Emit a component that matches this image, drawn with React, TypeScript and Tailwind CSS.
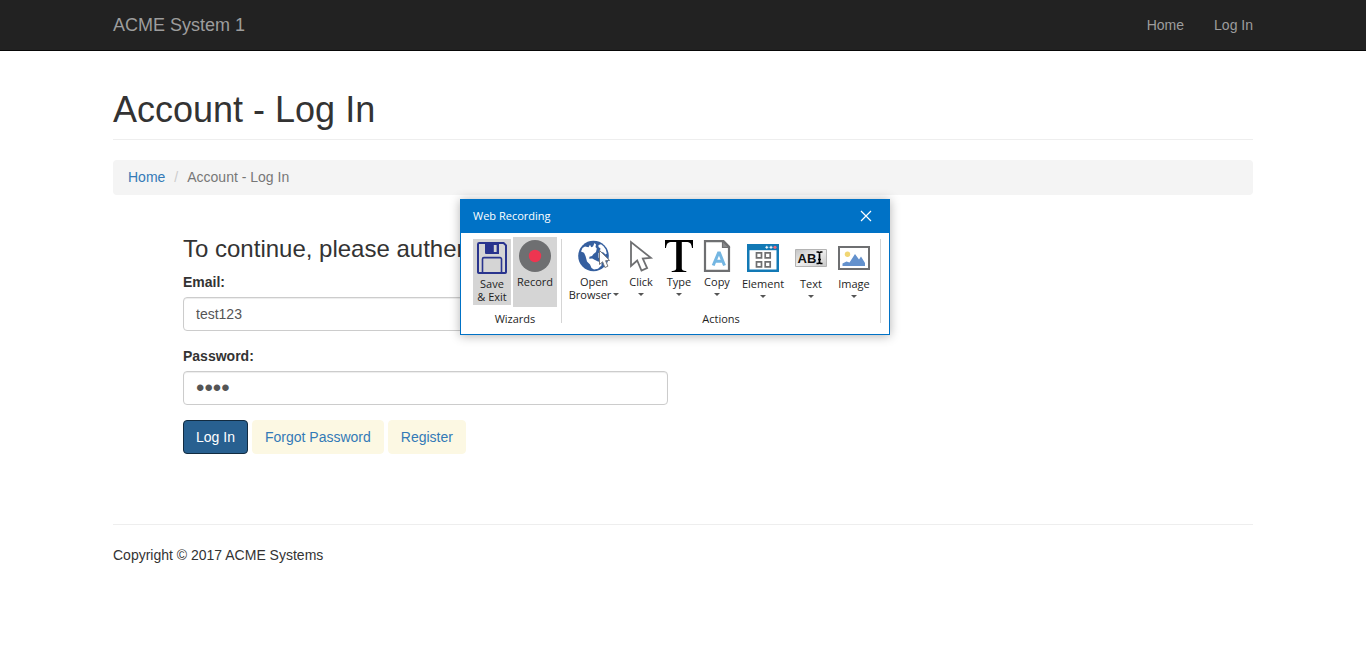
import React from "react";

function SaveIcon() {
  return (
    <svg width="32" height="32" viewBox="0 0 32 32" fill="none" aria-hidden="true">
      <path d="M3.200 1h24.400L30 3.400V30.200a.8.8 0 0 1-.8.8H2.800a.8.8 0 0 1-.8-.8V2.200A1.200 1.200 0 0 1 3.200 1Z" stroke="#29348e" strokeWidth="2" />
      <path d="M9 1h14v11H10a1 1 0 0 1-1-1V1Z" fill="#29348e" />
      <path d="M17.800 3h2.800v7h-2.800z" fill="#d5d5d5" />
      <path d="M6.500 31V17a1.400 1.400 0 0 1 1.400-1.400h16.200a1.400 1.400 0 0 1 1.400 1.400v14" stroke="#29348e" strokeWidth="1.600" />
    </svg>
  );
}

function RecordIcon() {
  return (
    <svg width="32" height="32" viewBox="0 0 32 32" aria-hidden="true">
      <circle cx="16" cy="16" r="16" fill="#6e6f71" />
      <circle cx="16" cy="16" r="6.2" fill="#ee3550" />
    </svg>
  );
}

function BrowserIcon() {
  return (
    <svg width="32" height="32" viewBox="0 0 32 32" aria-hidden="true">
      <circle cx="15.5" cy="16" r="15.3" fill="#355f9f" />
      <path d="M3 11.500 4.500 8l2.500-1.500 3.500.8L12 4.800l1.200 2.400 1.800-.7L16.500 3l1.500 1.500-.5 2.500 1.300 1.500-.8 3.500-2.500 2-1.500 2-2.500.8-.3 2 3-.3 2.800 1.500 3 1.500 3.500.8v3.200l-3.500 3.300-4 .7-2.500-1.500-1.500-3.500-3-3L7.500 16 6 12.800Z" fill="#fff" />
      <path d="m20.500 5 2.500-.8 2.500 2 2.300 3.300 1 4-1.300 1-2-2-2-.5-1.500-1.500.5-2-2-1.500ZM20.500 13l2-1 2.500 2 .5 5-2.500 2-2.500-3.500Z" fill="#fff" />
      <path d="M21.500 10.500v14l3.100-2.700 2.300 5.700 3-1.300-2.300-5.500 4-.3Z" fill="#fff" stroke="#77787b" strokeWidth="1" />
    </svg>
  );
}

function ClickIcon() {
  return (
    <svg width="32" height="32" viewBox="0 0 32 32" fill="none" aria-hidden="true">
      <path d="M6 2v24l6.2-5.5 4.3 10 5.6-2.4-4.3-9.6 8-.7L6 2Z" stroke="#6e6f71" strokeWidth="1.800" />
    </svg>
  );
}

function TypeIcon() {
  return (
    <svg width="32" height="32" viewBox="0 0 32 32" aria-hidden="true">
      <path d="M2 0h28v8h-1c-.5-4.500-2-6-6-6h-4.200v26c0 2 1 3 4.500 3v1H8.700v-1c3.500 0 4.500-1 4.500-3V2H9C5 2 3.500 3.500 3 8H2Z" fill="#000" />
    </svg>
  );
}

function CopyIcon() {
  return (
    <svg width="32" height="32" viewBox="0 0 32 32" fill="none" aria-hidden="true">
      <path d="M4 1.200h18.500l5.500 5.500v24.100H4Z" fill="#fff" stroke="#6e6f71" strokeWidth="2.200" />
      <path d="M21.500 1v6.500H28Z" fill="#8a8b8d" stroke="#6e6f71" strokeWidth="1.200" />
      <path d="m12.200 25.500 5.300-12.500h1l5 12.500M14 21.300h7.800" stroke="#74b6e2" strokeWidth="3" />
    </svg>
  );
}

function ElementIcon() {
  return (
    <svg width="32" height="32" viewBox="0 0 32 32" fill="none" aria-hidden="true">
      <path d="M0 2h32v28H0Z" fill="#1279b5" />
      <path d="M2.500 8.200h27v19.300h-27Z" fill="#fff" />
      <path d="M18.300 5.300h3M19.800 3.800v3M22.500 5.300h3M24 3.800v3" stroke="#fff" strokeWidth="1" />
      <circle cx="28" cy="5.300" r="1.600" fill="#ee6a7c" />
      <path d="M9.500 10.800h5v5h-5ZM18.200 10.800h5v5h-5ZM9.500 19.800h5v5h-5ZM18.200 19.800h5v5h-5Z" stroke="#6e6f71" strokeWidth="1.700" />
    </svg>
  );
}

function TextIcon() {
  return (
    <svg width="32" height="32" viewBox="0 0 32 32" aria-hidden="true">
      <defs>
        <linearGradient id="field" x1="0" y1="0" x2="1" y2="1">
          <stop offset="0" stopColor="#c4c4c4" />
          <stop offset=".5" stopColor="#ededed" />
          <stop offset="1" stopColor="#c8c8c8" />
        </linearGradient>
      </defs>
      <path d="M.5 7.500h31v17H.5Z" fill="url(#field)" stroke="#b4b4b4" />
      <text x="2.500" y="20.500" fontFamily="Liberation Sans, Arial, sans-serif" fontSize="13" fontWeight="700" fill="#111">AB</text>
      <path d="M21.500 10h1.800l1.200 1 1.200-1h1.800M21.500 21.500h1.800l1.200-1 1.200 1h1.800M24.500 10.500v10.500M23 17.500h3" fill="none" stroke="#000" strokeWidth="1.700" />
    </svg>
  );
}

function ImageIcon() {
  return (
    <svg width="32" height="32" viewBox="0 0 32 32" aria-hidden="true">
      <path d="M1 5h30v22H1Z" fill="#fff" stroke="#6e6f71" strokeWidth="2" />
      <circle cx="9.500" cy="12.300" r="2.700" fill="#f1d673" />
      <path d="M4.500 24v-2.500l4-2 3 1 5.500-8.500 4 5.500 2-3 4 6.500V24Z" fill="#6391cd" />
    </svg>
  );
}

function Caret() {
  return (
    <svg width="6" height="3" viewBox="0 0 6 3" aria-hidden="true">
      <path d="M0 0h6L3 3Z" fill="#555" />
    </svg>
  );
}

type ToolProps = {
  icon: React.ReactNode;
  lines: string[];
  className: string;
  menu?: "inline" | "below";
};

function Tool({ icon, lines, className, menu }: ToolProps) {
  return (
    <button type="button" className={`flex flex-col items-center pt-[3px] text-[11px] leading-[13px] text-[#1e1e1e] ${className}`}>
      {icon}
      <span className="mt-[3px] flex flex-col items-center whitespace-nowrap">
        {lines.map((line, i) => (
          <span key={line} className="flex items-center gap-0.5">
            {line}
            {menu === "inline" && i === lines.length - 1 && <Caret />}
          </span>
        ))}
      </span>
      {menu === "below" && (
        <span className="mt-[5px]">
          <Caret />
        </span>
      )}
    </button>
  );
}

function RecordingWindow() {
  return (
    <section
      aria-label="Web Recording"
      className="absolute top-[199px] left-[460px] flex flex-col border border-[#0072c6] bg-white font-['Open_Sans','Noto_Sans',sans-serif] shadow-[0_1px_10px_rgba(0,0,0,0.3)]"
    >
      <header className="flex h-[33px] items-center justify-between bg-[#0072c6] pr-[17px] pb-0.5 pl-3 text-[11px] text-white">
        <h2>Web Recording</h2>
        <button type="button" aria-label="Close">
          <svg width="12" height="12" viewBox="0 0 12 12" aria-hidden="true">
            <path d="m1 1 10 10M11 1 1 11" stroke="#fff" strokeWidth="1.200" />
          </svg>
        </button>
      </header>
      <div className="flex pt-1 pr-2 pb-[9px] pl-3 text-[11px] leading-[13px] text-[#1e1e1e]">
        <div className="flex flex-col">
          <div className="flex h-[75px] items-start gap-0.5">
            <Tool icon={<SaveIcon />} lines={["Save", "& Exit"]} className="mt-0.5 h-[66px] w-[38px] bg-[#d5d5d5]" />
            <Tool icon={<RecordIcon />} lines={["Record"]} className="h-[70px] w-11 bg-[#d5d5d5]" />
          </div>
          <span className="text-center">Wizards</span>
        </div>
        <div className="mx-1 my-0.5 w-px bg-[#d5d5d5]" />
        <div className="flex flex-col">
          <div className="flex h-[75px] items-start">
            <Tool icon={<BrowserIcon />} lines={["Open", "Browser"]} className="w-14" menu="inline" />
            <Tool icon={<ClickIcon />} lines={["Click"]} className="w-[38px]" menu="below" />
            <Tool icon={<TypeIcon />} lines={["Type"]} className="w-[38px]" menu="below" />
            <Tool icon={<CopyIcon />} lines={["Copy"]} className="w-[38px]" menu="below" />
            <Tool icon={<ElementIcon />} lines={["Element"]} className="mt-0.5 w-[54px]" menu="below" />
            <Tool icon={<TextIcon />} lines={["Text"]} className="mt-0.5 w-[42px]" menu="below" />
            <Tool icon={<ImageIcon />} lines={["Image"]} className="mt-0.5 w-11" menu="below" />
          </div>
          <span className="text-center">Actions</span>
        </div>
        <div className="my-0.5 ml-1 w-px bg-[#d5d5d5]" />
      </div>
    </section>
  );
}

const field =
  "h-[34px] w-full rounded border border-[#ccc] bg-white px-3 text-[#555] shadow-[inset_0_1px_1px_rgba(0,0,0,0.075)] outline-none";

export default function App() {
  return (
    <div className="relative font-['Liberation_Sans',Arial,sans-serif] text-[14px] leading-5 text-[#333]">
      <nav className="border-b border-[#080808] bg-[#222] text-[#9d9d9d]">
        <div className="mx-auto flex h-[50px] max-w-[1140px] items-center justify-between">
          <a href="#" className="text-[18px]">ACME System 1</a>
          <div className="flex gap-[30px]">
            <a href="#">Home</a>
            <a href="#">Log In</a>
          </div>
        </div>
      </nav>
      <div className="mx-auto max-w-[1140px]">
        <h1 className="mt-[39px] border-b border-[#eee] pb-[9px] text-[36px] leading-10">Account - Log In</h1>
        <ol className="mt-5 flex rounded bg-[#f4f4f4] px-[15px] pt-[7px] pb-2">
          <li>
            <a href="#" className="text-[#337ab7]">Home</a>
          </li>
          <li aria-hidden="true" className="px-[9px] text-[#ccc]">/</li>
          <li className="text-[#777]">Account - Log In</li>
        </ol>
        <main className="px-[70px] pt-[41px]">
          <h3 className="text-[24px] leading-[26px]">To continue, please authenticate</h3>
          <form className="mt-2.5 max-w-[485px]" onSubmit={(e) => e.preventDefault()}>
            <label htmlFor="email" className="mb-[5px] block font-bold">Email:</label>
            <input id="email" type="text" defaultValue="test123" className={`${field} text-[14px]`} />
            <label htmlFor="password" className="mt-[15px] mb-[5px] block font-bold">Password:</label>
            <input id="password" type="password" defaultValue="test" className={`${field} text-[24px]`} />
            <div className="mt-[15px] flex gap-1">
              <button type="submit" className="rounded border border-[#122b40] bg-[#286090] px-3 py-1.5 text-white">Log In</button>
              <a href="#" className="rounded border border-[#fcf8e3] bg-[#fcf8e3] px-3 py-1.5 text-[#337ab7]">Forgot Password</a>
              <a href="#" className="rounded border border-[#fcf8e3] bg-[#fcf8e3] px-3 py-1.5 text-[#337ab7]">Register</a>
            </div>
          </form>
        </main>
        <footer className="mt-[70px] border-t border-[#eee] pt-5">
          <p>Copyright © 2017 ACME Systems</p>
        </footer>
      </div>
      <RecordingWindow />
    </div>
  );
}
